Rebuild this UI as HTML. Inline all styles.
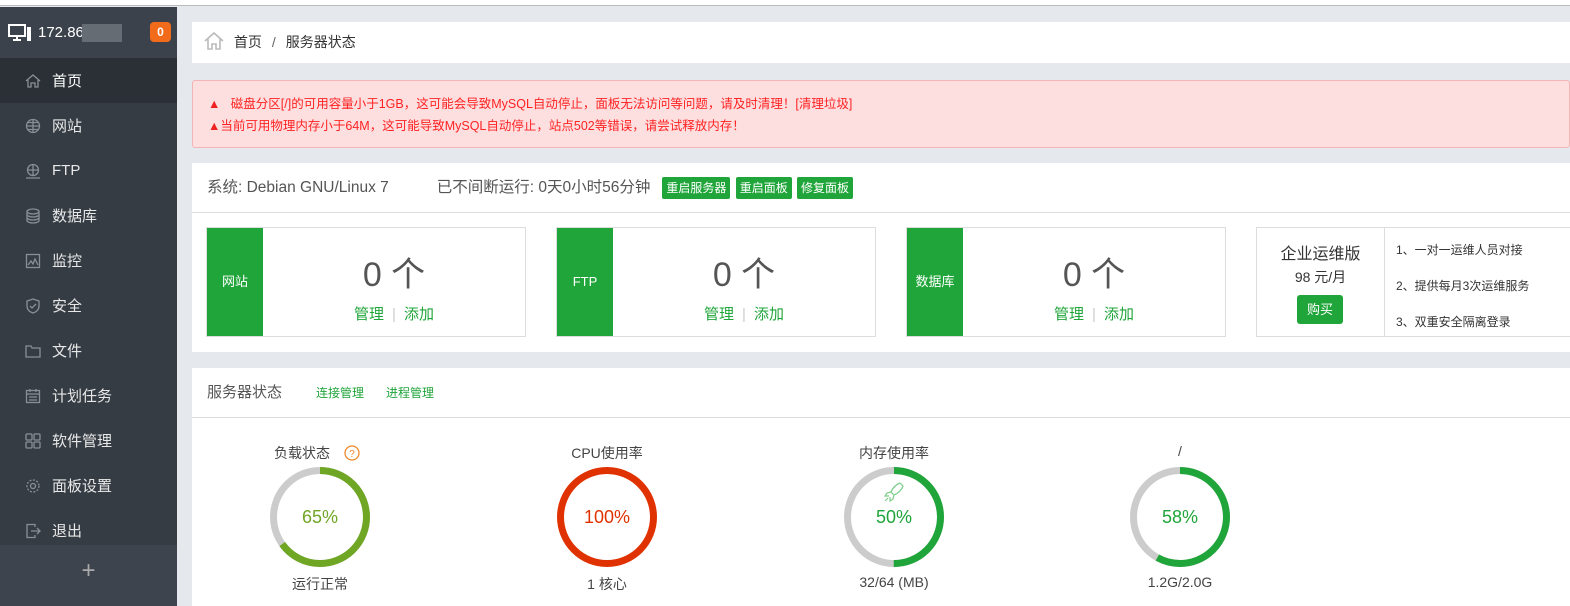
<!DOCTYPE html>
<html><head><meta charset="utf-8"><style>
*{margin:0;padding:0;box-sizing:border-box}
body{width:1570px;height:606px;overflow:hidden;background:#e5e8ec;font-family:"Liberation Sans","Noto Sans CJK SC",sans-serif;position:relative;color:#555}
.top{position:absolute;left:0;top:0;width:1570px;height:6px;background:#fff;border-bottom:1px solid #bbb}
.side{position:absolute;left:0;top:7px;width:177px;height:599px;background:#353c44}
.head{height:51px;background:#3b424b;color:#fff;font-size:15px;display:flex;align-items:center;padding-left:8px}
.blur{display:inline-block;width:40px;height:18px;background:#666c74;margin-left:-2px}
.badge{position:absolute;left:150px;top:15px;width:21px;height:20px;background:#f26b1b;border-radius:4px;color:#fff;font-size:12px;font-weight:bold;text-align:center;line-height:20px}
.item{height:45px;display:flex;align-items:center;padding-left:25px;color:#e8e8e8;font-size:15px}
.item.act{background:#2b3037;color:#fff}
.item svg{width:16px;height:16px;margin-right:11px;stroke:#8a8f96;fill:none;stroke-width:1.3}
.plus{position:absolute;left:0;top:538px;width:177px;height:61px;background:#3d444d;color:#aaa;font-size:24px;text-align:center;line-height:52px}
.box{position:absolute;background:#fff}
.green{color:#20a53a}
.btn{display:inline-block;background:#20a53a;color:#fff;font-size:12px;padding:0 4px;height:22px;line-height:22px;border-radius:2px;margin-right:1px}
.card{position:absolute;top:227px;width:320px;height:110px;border:1px solid #ddd;background:#fff}
.card .lab{position:absolute;left:0;top:0;width:56px;height:108px;background:#20a53a;color:#fff;font-size:13px;text-align:center;line-height:108px}
.card .num{position:absolute;left:56px;right:0;top:19px;text-align:center;font-size:34px;color:#555}
.card .lnk{position:absolute;left:56px;right:0;top:75px;text-align:center;font-size:15px;color:#20a53a}
.card .lnk i{font-style:normal;color:#ccc;margin:0 8px}
.g{position:absolute;width:200px;text-align:center;font-size:14px;color:#444}
</style></head><body>
<div class="top"></div>
<div class="side">
 <div class="head"><svg width="24" height="18" viewBox="0 0 24 18" fill="none" stroke="#fff" stroke-width="2"><rect x="1" y="1" width="16" height="11"/><path d="M5 16h8M9 12v4"/><rect x="20" y="4" width="2" height="12" fill="#fff"/></svg><span style="margin-left:6px">172.86</span><span class="blur"></span></div>
 <div class="badge">0</div>
 <div class="item act"><svg viewBox="0 0 16 16"><path d="M1 8L8 2l7 6M3 7v7h3v-4h4v4h3V7"/></svg>首页</div>
 <div class="item"><svg viewBox="0 0 16 16"><circle cx="8" cy="8" r="6.5"/><path d="M1.5 8h13M8 1.5v13M3 4.5h10M3 11.5h10"/></svg>网站</div>
 <div class="item"><svg viewBox="0 0 16 16"><circle cx="8" cy="7" r="5.5"/><path d="M2.5 7h11M8 1.5v11M1 15h14"/></svg>FTP</div>
 <div class="item"><svg viewBox="0 0 16 16"><ellipse cx="8" cy="3.5" rx="6" ry="2.5"/><path d="M2 3.5v9c0 1.4 2.7 2.5 6 2.5s6-1.1 6-2.5v-9M2 6.5c0 1.4 2.7 2.5 6 2.5s6-1.1 6-2.5M2 9.5c0 1.4 2.7 2.5 6 2.5s6-1.1 6-2.5"/></svg>数据库</div>
 <div class="item"><svg viewBox="0 0 16 16"><rect x="1.5" y="1.5" width="13" height="13"/><path d="M3 12l3-4 2 3 2-5 3 6"/></svg>监控</div>
 <div class="item"><svg viewBox="0 0 16 16"><path d="M8 1l6 2v5c0 4-3 6-6 7-3-1-6-3-6-7V3z"/><path d="M5 8l2 2 4-4"/></svg>安全</div>
 <div class="item"><svg viewBox="0 0 16 16"><path d="M1 3h5l1 2h8v9H1z"/></svg>文件</div>
 <div class="item"><svg viewBox="0 0 16 16"><rect x="1.5" y="2.5" width="13" height="12"/><path d="M1.5 6h13M5 1v3M11 1v3M4 9h8M4 12h8"/></svg>计划任务</div>
 <div class="item"><svg viewBox="0 0 16 16"><rect x="1" y="1" width="6" height="6" rx="1"/><rect x="9" y="1" width="6" height="6" rx="1"/><rect x="1" y="9" width="6" height="6" rx="1"/><rect x="9" y="9" width="6" height="6" rx="1"/></svg>软件管理</div>
 <div class="item"><svg viewBox="0 0 16 16"><circle cx="8" cy="8" r="2.5"/><circle cx="8" cy="8" r="6" stroke-dasharray="2 1.5"/></svg>面板设置</div>
 <div class="item"><svg viewBox="0 0 16 16"><path d="M10 4V1.5H2v13h8V12M6 8h9M12 5l3 3-3 3"/></svg>退出</div>
 <div class="plus">+</div>
</div>

<div class="box" style="left:192px;top:22px;width:1378px;height:41px;font-size:14px;line-height:41px;padding-left:12px;color:#333">
 <svg width="20" height="20" viewBox="0 0 20 20" style="vertical-align:-4px" fill="none" stroke="#bbb" stroke-width="1.6"><path d="M1 10L10 2l9 8M4 8v10h4v-5h4v5h4V8"/></svg>
 <span style="margin-left:6px">首页</span><span style="margin:0 10px;color:#666">/</span>服务器状态</div>

<div class="box" style="left:192px;top:80px;width:1378px;height:68px;background:#fddfe0;border:1px solid #f5b5b5;border-radius:3px;color:#f22;font-size:12.5px;padding:12px 0 0 15px;line-height:22px">
 <div><span style="color:#e22">▲</span>&nbsp;&nbsp;&nbsp;磁盘分区[/]的可用容量小于1GB，这可能会导致MySQL自动停止，面板无法访问等问题，请及时清理！[清理垃圾]</div>
 <div><span style="color:#e22">▲</span>当前可用物理内存小于64M，这可能导致MySQL自动停止，站点502等错误，请尝试释放内存！</div>
</div>

<div class="box" style="left:192px;top:163px;width:1378px;height:189px">
 <div style="height:50px;border-bottom:1px solid #ddd;font-size:15.5px;line-height:50px;padding-left:15px;color:#555">系统: Debian GNU/Linux 7<span style="margin-left:48px">已不间断运行: 0天0小时56分钟</span><span style="margin-left:12px"><span class="btn">重启服务器</span> <span class="btn">重启面板</span> <span class="btn">修复面板</span></span></div>
</div>
<div class="card" style="left:206px"><div class="lab">网站</div><div class="num">0 个</div><div class="lnk">管理<i>|</i>添加</div></div>
<div class="card" style="left:556px"><div class="lab">FTP</div><div class="num">0 个</div><div class="lnk">管理<i>|</i>添加</div></div>
<div class="card" style="left:906px"><div class="lab">数据库</div><div class="num">0 个</div><div class="lnk">管理<i>|</i>添加</div></div>
<div class="card" style="left:1256px;width:330px">
 <div style="position:absolute;left:0;width:127px;top:12px;text-align:center;font-size:16px;color:#333">企业运维版</div>
 <div style="position:absolute;left:0;width:127px;top:39px;text-align:center;font-size:14px;color:#333">98 元/月</div>
 <div style="position:absolute;left:40px;top:67px;width:46px;height:29px;background:#20a53a;color:#fff;border-radius:3px;font-size:13px;text-align:center;line-height:29px">购买</div>
 <div style="position:absolute;left:127px;top:0;height:108px;border-left:1px solid #ddd"></div>
 <div style="position:absolute;left:139px;top:4px;font-size:12px;color:#333;line-height:36px">1、一对一运维人员对接<br>2、提供每月3次运维服务<br>3、双重安全隔离登录</div>
</div>

<div class="box" style="left:192px;top:368px;width:1378px;height:238px">
 <div style="height:50px;border-bottom:1px solid #ddd;font-size:15px;line-height:50px;padding-left:15px;color:#555">服务器状态<span class="green" style="font-size:12px;margin-left:34px">连接管理</span><span class="green" style="font-size:12px;margin-left:22px">进程管理</span></div>
</div>

<svg style="position:absolute;left:0;top:0" width="1570" height="606">
 <g fill="none" stroke-width="7">
  <circle cx="320" cy="517" r="46.5" stroke="#ccc"/>
  <circle cx="320" cy="517" r="46.5" stroke="#6fa624" stroke-dasharray="189.9 292.2" transform="rotate(-90 320 517)"/>
  <circle cx="607" cy="517" r="46.5" stroke="#e03200"/>
  <circle cx="894" cy="517" r="46.5" stroke="#ccc"/>
  <circle cx="894" cy="517" r="46.5" stroke="#20a53a" stroke-dasharray="146.1 292.2" transform="rotate(-90 894 517)"/>
  <circle cx="1180" cy="517" r="46.5" stroke="#ccc"/>
  <circle cx="1180" cy="517" r="46.5" stroke="#20a53a" stroke-dasharray="169.5 292.2" transform="rotate(-90 1180 517)"/>
 </g>
 <g fill="none" stroke="#7ccf8a" stroke-width="1.2"><path d="M900 483c-3 1-7 4-9 9l3 3c5-2 8-6 9-9zM891 492l-4 1-2 3 4 0M894 495l-1 4-3 2 0-4M888 498l-3 3"/></g>
 <circle cx="352" cy="453" r="7" fill="none" stroke="#f0892a" stroke-width="1.3"/>
 <text x="352" y="457" font-size="10" fill="#f0892a" text-anchor="middle" font-family="Liberation Sans">?</text>
</svg>
<div class="g" style="left:212px;top:443px">负载状态 <span style="display:inline-block;width:16px"></span></div>
<div class="g" style="left:220px;top:507px;font-size:18px;color:#6fa624">65%</div>
<div class="g" style="left:220px;top:574px">运行正常</div>
<div class="g" style="left:507px;top:443px">CPU使用率</div>
<div class="g" style="left:507px;top:507px;font-size:18px;color:#e03200">100%</div>
<div class="g" style="left:507px;top:574px">1 核心</div>
<div class="g" style="left:794px;top:443px">内存使用率</div>
<div class="g" style="left:794px;top:507px;font-size:18px;color:#20a53a">50%</div>
<div class="g" style="left:794px;top:574px">32/64 (MB)</div>
<div class="g" style="left:1080px;top:443px">/</div>
<div class="g" style="left:1080px;top:507px;font-size:18px;color:#20a53a">58%</div>
<div class="g" style="left:1080px;top:574px">1.2G/2.0G</div>
</body></html>
